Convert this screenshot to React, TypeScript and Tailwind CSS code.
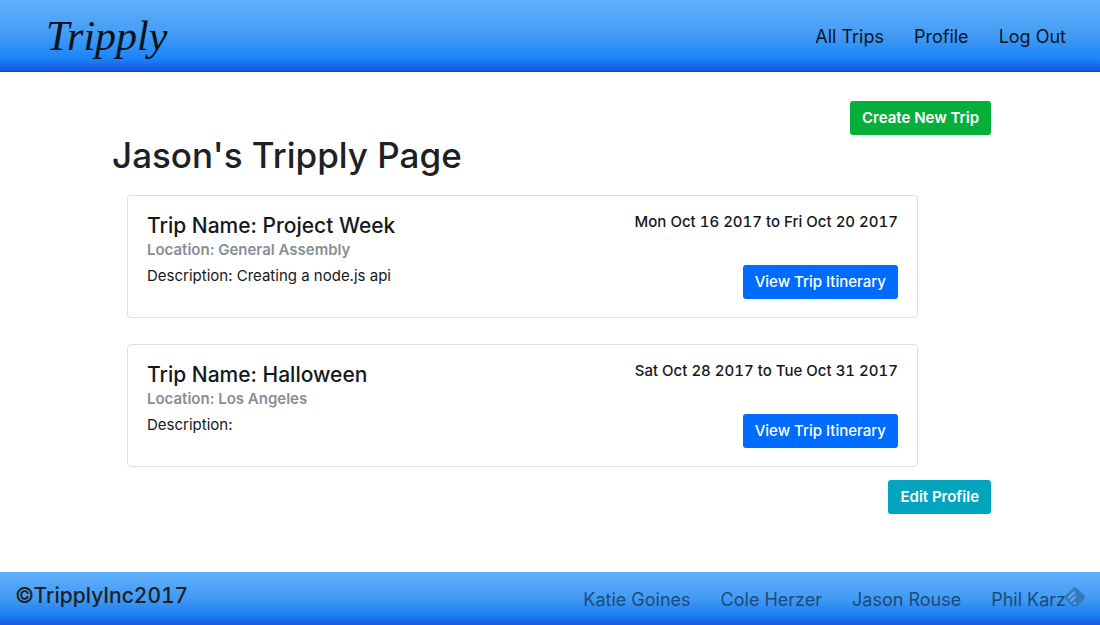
const trips = [
  {
    name: 'Project Week',
    location: 'General Assembly',
    description: 'Creating a node.js api',
    dates: 'Mon Oct 16 2017 to Fri Oct 20 2017',
  },
  {
    name: 'Halloween',
    location: 'Los Angeles',
    description: '',
    dates: 'Sat Oct 28 2017 to Tue Oct 31 2017',
  },
];

const navLinks = ['All Trips', 'Profile', 'Log Out'];
const authors = ['Katie Goines', 'Cole Herzer', 'Jason Rouse', 'Phil Karz'];

type Trip = (typeof trips)[number];

function TripCard({ trip }: { trip: Trip }) {
  return (
    <article className="flex justify-between rounded border border-[#dfdfdf] px-[19px] pt-4 pb-[18px]">
      <div>
        <h2 className="text-[21px] leading-7 font-medium text-[#15181b]">Trip Name: {trip.name}</h2>
        <h3 className="text-[15px] leading-5 font-semibold text-[#868e96]">Location: {trip.location}</h3>
        <p className="mt-1 text-[15px] leading-6 text-[#15181b]">Description: {trip.description}</p>
      </div>
      <div className="flex flex-col items-end gap-[33px]">
        <p className="text-[15px] leading-5 font-medium text-[#15181b] tabular-nums">{trip.dates}</p>
        <button className="h-[34px] rounded-[3px] bg-[#006bff] px-3 text-[15px] font-medium text-white">
          View Trip Itinerary
        </button>
      </div>
    </article>
  );
}

function FeedlyMark() {
  return (
    <svg viewBox="0 0 22 20" className="absolute top-[15px] right-[14px] h-5 w-[22px]" aria-hidden="true">
      <path
        d="M9.3 1.1 Q11 -.4 12.7 1.1 L20.6 8.5 Q22 10 20.6 11.5 L13.8 18.6 Q12.8 19.6 11.5 19.6 H9.5 Q8.2 19.6 7.3 18.6 L1.2 11.8 Q0 10 1.4 8.6 Z"
        fill="#2f72ad"
        fillOpacity="0.8"
      />
      <g stroke="#62aaf0" strokeWidth="2.1" strokeLinecap="round">
        <path d="M4.8 10.4 10.2 5.2" />
        <path d="M7.3 13.6 11 10" />
        <path d="M10.2 16.4 10.8 15.9" />
      </g>
    </svg>
  );
}

export default function App() {
  return (
    <div className="flex min-h-screen flex-col bg-white font-[Inter,sans-serif]">
      <header className="flex h-[72px] items-center justify-between border-b border-[#1249c9] bg-[linear-gradient(to_bottom,#62b0fb_0%,#429bf4_50%,#1b84fa_83%,#1a59e0_98%)] pr-[34px] pl-[46px]">
        <a
          href="#"
          className="font-['Apple_Chancery','Liberation_Serif',serif] text-[42px] leading-[60px] text-[#06121c] italic"
        >
          Tripply
        </a>
        <nav className="flex gap-[30px] pt-[2px] text-lg leading-6 text-[#0a1520]">
          {navLinks.map((label) => (
            <a key={label} href="#">
              {label}
            </a>
          ))}
        </nav>
      </header>

      <main className="flex flex-1 flex-col pt-[29px] pr-[109px] pb-14 pl-28">
        <button className="h-[34px] self-end rounded-[3px] bg-[#04af3c] px-3 text-[15px] font-semibold text-white">
          Create New Trip
        </button>
        <h1 className="text-[35px] leading-10 font-medium text-[#1d2126]">Jason&apos;s Tripply Page</h1>
        <section className="mt-5 mr-[73px] ml-[15px] flex flex-col gap-[26px]">
          {trips.map((trip) => (
            <TripCard key={trip.name} trip={trip} />
          ))}
        </section>
        <button className="mt-[13px] h-[34px] self-end rounded-[3px] bg-[#03a4be] px-3 text-[15px] font-semibold text-white">
          Edit Profile
        </button>
      </main>

      <footer className="relative flex h-[53px] items-start justify-between bg-[linear-gradient(to_bottom,#60affc_0%,#429bf4_50%,#1b7eee_82%,#1a59e0_100%)] pr-[34px] pl-[15px]">
        <p className="pt-[10px] text-[21px] leading-7 font-medium text-[#1d2126] tabular-nums">©TripplyInc2017</p>
        <ul className="flex gap-[30px] pt-4 text-lg leading-6 text-[#1c4a7a]">
          {authors.map((author) => (
            <li key={author}>{author}</li>
          ))}
        </ul>
        <FeedlyMark />
      </footer>
    </div>
  );
}
